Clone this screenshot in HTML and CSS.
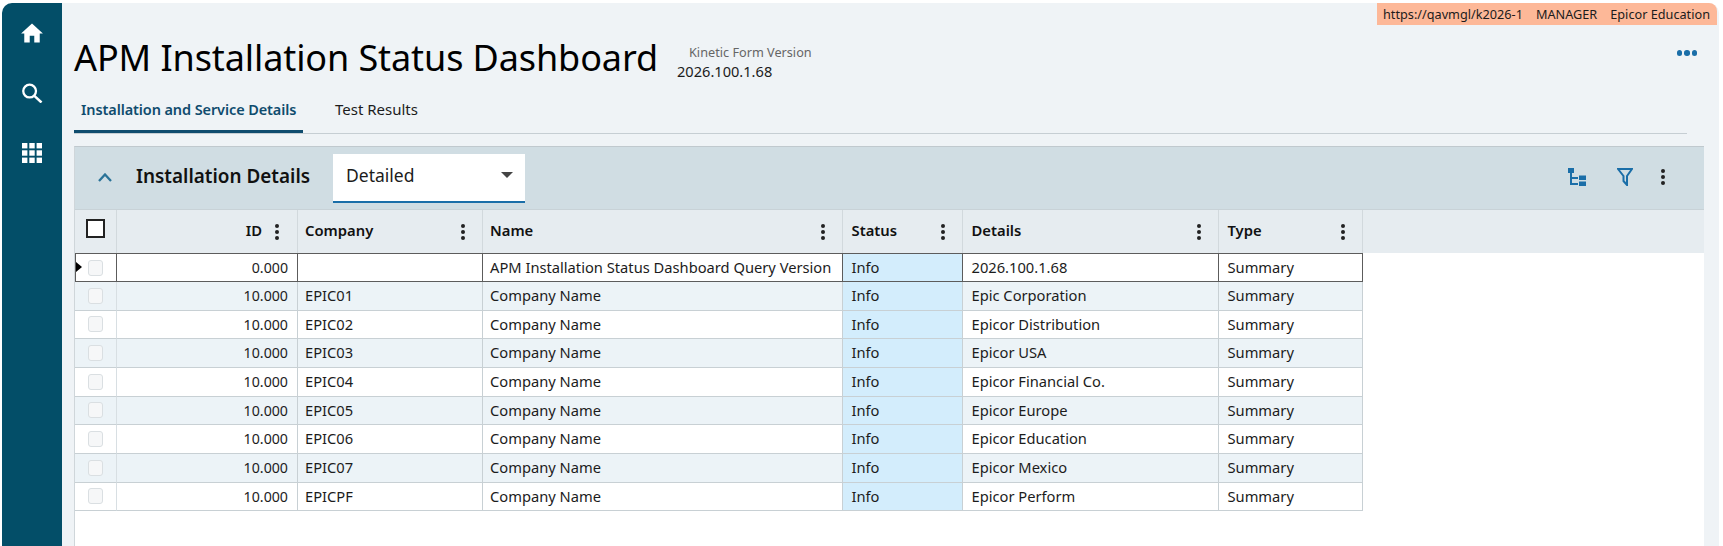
FILE: index.html
```html
<!DOCTYPE html>
<html lang="en">
<head>
  <meta charset="UTF-8">
  <title>APM Installation Status Dashboard</title>
  <link rel="stylesheet" href="styles.css">
</head>
<body>
  <!-- Left Navigation -->
  <nav class="sidebar">
    <svg class="nav-icon" viewBox="0 0 24 22"><path d="M12 0.5 L24 11.5 H20.5 V21.5 H14.5 V14 H9.5 V21.5 H3.5 V11.5 H0 Z" fill="#fff"/></svg>
    <svg class="nav-icon" viewBox="0 0 22 21"><circle cx="8.5" cy="8.5" r="6.7" fill="none" stroke="#fff" stroke-width="2.4"/><path d="M13.5 13.5 L21 20.5" stroke="#fff" stroke-width="2.6"/></svg>
    <svg class="nav-icon" viewBox="0 0 20 20" fill="#fff">
      <rect x="0" y="0" width="5.4" height="5.4"/><rect x="7.3" y="0" width="5.4" height="5.4"/><rect x="14.6" y="0" width="5.4" height="5.4"/>
      <rect x="0" y="7.3" width="5.4" height="5.4"/><rect x="7.3" y="7.3" width="5.4" height="5.4"/><rect x="14.6" y="7.3" width="5.4" height="5.4"/>
      <rect x="0" y="14.6" width="5.4" height="5.4"/><rect x="7.3" y="14.6" width="5.4" height="5.4"/><rect x="14.6" y="14.6" width="5.4" height="5.4"/>
    </svg>
  </nav>

  <main class="main">
    <div class="env-banner">
      <span>https://qavmgl/k2026-1</span>
      <span>MANAGER</span>
      <span>Epicor Education</span>
    </div>

    <!-- Title -->
    <div class="title-row">
      <h1>APM Installation Status Dashboard</h1>
      <div class="form-version">
        <div class="version-label">Kinetic Form Version</div>
        <div class="version-value">2026.100.1.68</div>
      </div>
      <div class="more-dots"><i></i><i></i><i></i></div>
    </div>

    <!-- Tabs -->
    <div class="tabs">
      <div class="tab active">Installation and Service Details</div>
      <div class="tab">Test Results</div>
    </div>

    <!-- Grid Panel -->
    <section class="panel">
      <div class="panel-header">
        <svg class="chevron" viewBox="0 0 14 9"><path d="M1 8 L7 1.5 L13 8" fill="none" stroke="#2a7398" stroke-width="2.3"/></svg>
        <div class="panel-title">Installation Details</div>
        <div class="dropdown">
          <span>Detailed</span>
          <div class="caret"></div>
        </div>
        <div class="panel-tools">
          <svg class="tool-tree" viewBox="0 0 19 18" fill="#1a6ea8">
            <rect x="0" y="0" width="6" height="5"/><rect x="2" y="5" width="2" height="12"/><rect x="2" y="9" width="8" height="2"/><rect x="2" y="15" width="8" height="2"/>
            <rect x="11" y="7.5" width="7" height="4.5"/><rect x="11" y="13.5" width="7" height="4.5"/>
          </svg>
          <svg class="tool-filter" viewBox="0 0 16 18"><path d="M1 1 H15 L10 8 V17 L6.5 13 V8 Z" fill="none" stroke="#1a6ea8" stroke-width="2"/></svg>
          <div class="kebab"><i></i><i></i><i></i></div>
        </div>
      </div>

      <div class="grid-head">
        <div class="head-cell check-cell"><div class="head-check"></div></div>
        <div class="head-cell right"><span>ID</span><div class="kebab"><i></i><i></i><i></i></div></div>
        <div class="head-cell"><span>Company</span><div class="kebab"><i></i><i></i><i></i></div></div>
        <div class="head-cell"><span>Name</span><div class="kebab"><i></i><i></i><i></i></div></div>
        <div class="head-cell wide-pad"><span>Status</span><div class="kebab"><i></i><i></i><i></i></div></div>
        <div class="head-cell wide-pad"><span>Details</span><div class="kebab"><i></i><i></i><i></i></div></div>
        <div class="head-cell wide-pad"><span>Type</span><div class="kebab"><i></i><i></i><i></i></div></div>
      </div>

      <div class="grid-row selected">
        <div class="cell check-cell"><div class="row-pointer"></div><div class="row-check"></div></div>
        <div class="cell num">0.000</div>
        <div class="cell"></div>
        <div class="cell">APM Installation Status Dashboard Query Version</div>
        <div class="cell info">Info</div>
        <div class="cell wide-pad">2026.100.1.68</div>
        <div class="cell wide-pad">Summary</div>
      </div>
      <div class="grid-row alt">
        <div class="cell check-cell"><div class="row-check"></div></div>
        <div class="cell num">10.000</div><div class="cell">EPIC01</div><div class="cell">Company Name</div>
        <div class="cell info">Info</div><div class="cell wide-pad">Epic Corporation</div><div class="cell wide-pad">Summary</div>
      </div>
      <div class="grid-row">
        <div class="cell check-cell"><div class="row-check"></div></div>
        <div class="cell num">10.000</div><div class="cell">EPIC02</div><div class="cell">Company Name</div>
        <div class="cell info">Info</div><div class="cell wide-pad">Epicor Distribution</div><div class="cell wide-pad">Summary</div>
      </div>
      <div class="grid-row alt">
        <div class="cell check-cell"><div class="row-check"></div></div>
        <div class="cell num">10.000</div><div class="cell">EPIC03</div><div class="cell">Company Name</div>
        <div class="cell info">Info</div><div class="cell wide-pad">Epicor USA</div><div class="cell wide-pad">Summary</div>
      </div>
      <div class="grid-row">
        <div class="cell check-cell"><div class="row-check"></div></div>
        <div class="cell num">10.000</div><div class="cell">EPIC04</div><div class="cell">Company Name</div>
        <div class="cell info">Info</div><div class="cell wide-pad">Epicor Financial Co.</div><div class="cell wide-pad">Summary</div>
      </div>
      <div class="grid-row alt">
        <div class="cell check-cell"><div class="row-check"></div></div>
        <div class="cell num">10.000</div><div class="cell">EPIC05</div><div class="cell">Company Name</div>
        <div class="cell info">Info</div><div class="cell wide-pad">Epicor Europe</div><div class="cell wide-pad">Summary</div>
      </div>
      <div class="grid-row">
        <div class="cell check-cell"><div class="row-check"></div></div>
        <div class="cell num">10.000</div><div class="cell">EPIC06</div><div class="cell">Company Name</div>
        <div class="cell info">Info</div><div class="cell wide-pad">Epicor Education</div><div class="cell wide-pad">Summary</div>
      </div>
      <div class="grid-row alt">
        <div class="cell check-cell"><div class="row-check"></div></div>
        <div class="cell num">10.000</div><div class="cell">EPIC07</div><div class="cell">Company Name</div>
        <div class="cell info">Info</div><div class="cell wide-pad">Epicor Mexico</div><div class="cell wide-pad">Summary</div>
      </div>
      <div class="grid-row">
        <div class="cell check-cell"><div class="row-check"></div></div>
        <div class="cell num">10.000</div><div class="cell">EPICPF</div><div class="cell">Company Name</div>
        <div class="cell info">Info</div><div class="cell wide-pad">Epicor Perform</div><div class="cell wide-pad">Summary</div>
      </div>
    </section>
  </main>
</body>
</html>
```

FILE: styles.css
```css
:root {
  --teal: #034e68;
  --blue: #1a6ea8;
  --page-bg: #eff3f6;
  --line: #c8d0d4;
  --text: #1c1c1c;
}
html, body {
  height: 100%;
}
body {
  margin: 0;
  box-sizing: border-box;
  padding: 3px 4px 0 2px;
  height: 546px;
  overflow: hidden;
  background: #fff;
  display: flex;
  font-family: "Noto Sans", sans-serif;
  color: var(--text);
}
/* Left Navigation */
.sidebar {
  width: 60px;
  flex: none;
  background: var(--teal);
  border-top-left-radius: 10px;
  display: flex;
  flex-direction: column;
  align-items: center;
  padding-top: 20px;
  gap: 40px;
  box-sizing: border-box;
}
.nav-icon {
  width: 22px;
  height: 20px;
  display: block;
}
/* Main Area */
.main {
  flex: 1;
  min-width: 0;
  background: var(--page-bg);
  border-top-right-radius: 10px;
  padding: 0 15px 0 12px;
  display: flex;
  flex-direction: column;
}
.env-banner {
  align-self: flex-end;
  margin-right: -13px;
  height: 22px;
  width: 340px;
  flex: none;
  box-sizing: border-box;
  background: #fdb898;
  border-top-right-radius: 8px;
  padding: 0 7px 0 6px;
  display: flex;
  justify-content: space-between;
  align-items: center;
  font-size: 12.7px;
  white-space: nowrap;
}
/* Title */
.title-row {
  display: flex;
  height: 66px;
  flex: none;
  padding-right: 7px;
}
h1 {
  margin: 11px 19px 0 0;
  font-size: 36px;
  font-weight: 400;
  letter-spacing: -0.1px;
  line-height: 44px;
  color: #000;
  white-space: nowrap;
}
.form-version {
  margin-top: 18px;
}
.version-label {
  font-size: 12.7px;
  color: #666;
  line-height: 18px;
  margin: 0 0 0 12px;
}
.version-value {
  font-size: 14.6px;
  line-height: 20px;
}
.more-dots {
  margin: 16px 0 0 auto;
  display: flex;
  gap: 2px;
  height: 24px;
  align-items: center;
}
.more-dots i {
  width: 5.5px;
  height: 5.5px;
  border-radius: 50%;
  background: var(--blue);
}
/* Tabs */
.tabs {
  display: flex;
  height: 42px;
  flex: none;
  margin-right: 17px;
  border-bottom: 1px solid #c6ced3;
}
.tab {
  padding: 8px 0 0 0;
  font-size: 15px;
  line-height: 20px;
  box-sizing: border-box;
  white-space: nowrap;
}
.tab:first-child {
  width: 229px;
  padding-left: 7px;
}
.tab + .tab {
  margin-left: 32px;
}
.tab.active {
  color: #0f4c6e;
  font-size: 14.5px;
  letter-spacing: -0.1px;
  font-weight: 600;
  border-bottom: 3px solid #0f4c6e;
  height: 42px;
}
/* Grid Panel */
.panel {
  margin-top: 12px;
  flex: 1;
  background: #fff;
  border-left: 1px solid #cfd6da;
  border-top: 1px solid #c0c9ce;
}
.panel-header {
  height: 62px;
  box-sizing: border-box;
  padding-bottom: 2px;
  background: #d0dde3;
  display: flex;
  align-items: center;
}
.chevron {
  width: 14px;
  height: 9px;
  margin: 0 24px 0 23px;
}
.panel-title {
  font-size: 18.9px;
  font-weight: 600;
  width: 197px;
  padding-bottom: 2px;
  white-space: nowrap;
  color: #111;
}
.dropdown {
  width: 192px;
  height: 49px;
  margin-top: 3px;
  box-sizing: border-box;
  background: #fff;
  border-bottom: 2px solid var(--blue);
  display: flex;
  align-items: center;
  justify-content: space-between;
  padding: 0 12px 5px 13px;
  font-size: 17.5px;
}
.caret {
  width: 0;
  height: 0;
  border-left: 6px solid transparent;
  border-right: 6px solid transparent;
  border-top: 6px solid #444;
}
.panel-tools {
  margin-left: auto;
  display: flex;
  align-items: center;
  padding-right: 39px;
  height: 18px;
}
.tool-tree {
  width: 19px;
  height: 18px;
}
.tool-filter {
  width: 16px;
  height: 18px;
  margin-left: 30px;
}
.kebab {
  display: flex;
  flex-direction: column;
  gap: 2px;
  width: 4px;
  flex: none;
}
.kebab i {
  width: 4px;
  height: 4px;
  border-radius: 50%;
  background: #222;
}
.panel-tools .kebab {
  margin-left: 28px;
}
/* Grid */
.grid-head, .grid-row {
  display: grid;
  grid-template-columns: 42px 181px 185px 360px 120px 256px 144px 1fr;
}
.grid-head {
  height: 44px;
  background: #e6ecf0;
  border-top: 1px solid #c8d2d7;
  box-sizing: border-box;
}
.head-cell {
  display: flex;
  align-items: center;
  justify-content: space-between;
  padding: 0 17px 0 7px;
  border-right: 1px solid #d2d9dd;
  font-size: 14.8px;
  font-weight: 600;
  color: #111;
}
.head-cell span {
  margin-bottom: 4px;
}
.head-cell.wide-pad {
  padding-left: 8.5px;
}
.head-cell.right {
  justify-content: flex-end;
  gap: 13px;
  padding-right: 18px;
}
.head-cell.check-cell {
  justify-content: flex-start;
  padding: 0 0 6px 11px;
}
.head-check {
  width: 19px;
  height: 19px;
  box-sizing: border-box;
  border: 2px solid #222;
  background: #fff;
}
.grid-row {
  height: 28.67px;
  box-sizing: border-box;
}
.cell {
  box-sizing: border-box;
  padding: 0 7px;
  font-size: 14.7px;
  line-height: 27px;
  white-space: nowrap;
  border-right: 1px solid var(--line);
  border-bottom: 1px solid var(--line);
}
.cell.info, .cell.wide-pad {
  padding-left: 8.5px;
}
.num {
  text-align: right;
  padding-right: 9px;
  font-size: 14.2px;
}
.alt .cell {
  background: #ecf3f7;
}
.cell.check-cell {
  border-right-color: #d8dfe3;
}
.grid-row .info, .alt .info {
  background: #d3edfc;
}
.check-cell {
  display: flex;
  align-items: center;
  padding: 0 0 0 13px;
  position: relative;
}
.row-check {
  width: 15px;
  height: 16px;
  box-sizing: border-box;
  border: 1px solid #dadfe2;
  border-radius: 3px;
  background: #f6f7f8;
}
.selected {
  height: 29px;
}
.selected .cell {
  border-top: 1px solid #5c5c5c;
  border-bottom: 1px solid #5c5c5c;
  border-right: 1px solid #5c5c5c;
}
.selected .check-cell {
  border-left: 1px solid #5c5c5c;
  padding-left: 12px;
}
.row-pointer {
  position: absolute;
  left: 0;
  top: 8px;
  border-left: 6px solid #000;
  border-top: 5px solid transparent;
  border-bottom: 5px solid transparent;
}
```
